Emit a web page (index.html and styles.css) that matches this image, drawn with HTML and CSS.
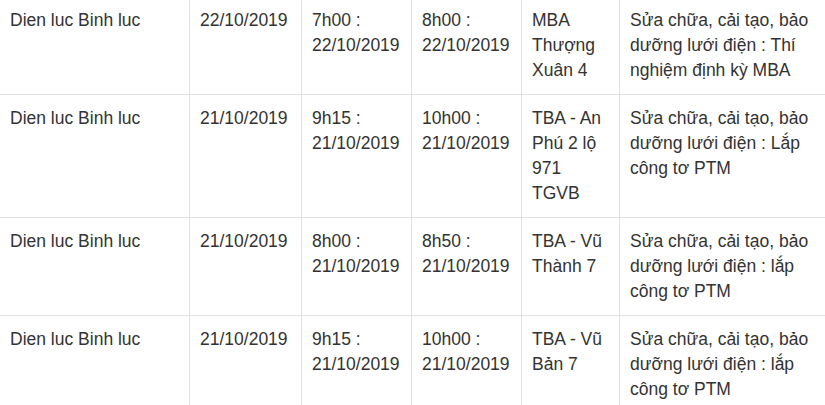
FILE: index.html
```html
<!DOCTYPE html>
<html lang="vi">
<head>
<meta charset="utf-8">
<title>Lịch cắt điện</title>
<link rel="stylesheet" href="styles.css">
</head>
<body>
<table class="schedule">
  <colgroup>
    <col class="c-unit">
    <col class="c-date">
    <col class="c-from">
    <col class="c-to">
    <col class="c-place">
    <col class="c-reason">
  </colgroup>
  <tbody>
    <tr>
      <td>Dien luc Binh luc</td>
      <td>22/10/2019</td>
      <td>7h00 : 22/10/2019</td>
      <td>8h00 : 22/10/2019</td>
      <td>MBA Thượng Xuân 4</td>
      <td>Sửa chữa, cải tạo, bảo dưỡng lưới điện : Thí nghiệm định kỳ MBA</td>
    </tr>
    <tr>
      <td>Dien luc Binh luc</td>
      <td>21/10/2019</td>
      <td>9h15 : 21/10/2019</td>
      <td>10h00 : 21/10/2019</td>
      <td>TBA - An Phú 2 lộ 971 TGVB</td>
      <td>Sửa chữa, cải tạo, bảo dưỡng lưới điện : Lắp công tơ PTM</td>
    </tr>
    <tr>
      <td>Dien luc Binh luc</td>
      <td>21/10/2019</td>
      <td>8h00 : 21/10/2019</td>
      <td>8h50 : 21/10/2019</td>
      <td>TBA - Vũ Thành 7</td>
      <td>Sửa chữa, cải tạo, bảo dưỡng lưới điện : lắp công tơ PTM</td>
    </tr>
    <tr>
      <td>Dien luc Binh luc</td>
      <td>21/10/2019</td>
      <td>9h15 : 21/10/2019</td>
      <td>10h00 : 21/10/2019</td>
      <td>TBA - Vũ Bản 7</td>
      <td>Sửa chữa, cải tạo, bảo dưỡng lưới điện : lắp công tơ PTM</td>
    </tr>
  </tbody>
</table>
</body>
</html>
```

FILE: styles.css
```css
html, body {
  margin: 0;
  padding: 0;
  background: #ffffff;
  overflow: hidden;
}

.schedule {
  border-collapse: collapse;
  table-layout: fixed;
  width: 840px;
  margin: -4px 0 0 -1px;
  font-family: "Liberation Sans", Arial, sans-serif;
  font-size: 17.5px;
  line-height: 25px;
  color: #333333;
}

.c-unit { width: 190px; }
.c-date { width: 112px; }
.c-from { width: 110px; }
.c-to { width: 110px; }
.c-place { width: 98px; }
.c-reason { width: 220px; }

.schedule td {
  border: 1px solid #e2e2e2;
  padding: 11px 10px;
  vertical-align: top;
  text-align: left;
}
```
